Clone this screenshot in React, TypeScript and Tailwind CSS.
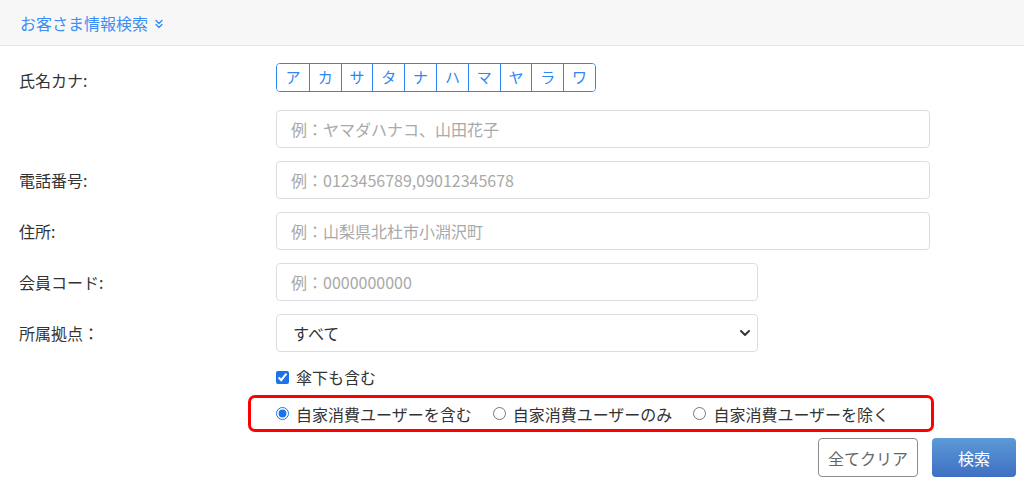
import React, { useState } from 'react';
import { ChevronsDown } from 'lucide-react';

const KANA = ['ア', 'カ', 'サ', 'タ', 'ナ', 'ハ', 'マ', 'ヤ', 'ラ', 'ワ'];

const RADIOS = [
  { id: 'include', label: '自家消費ユーザーを含む' },
  { id: 'only', label: '自家消費ユーザーのみ' },
  { id: 'exclude', label: '自家消費ユーザーを除く' },
];

const inputCls =
  'h-[38px] rounded-[4px] border border-[#dadee3] bg-white px-[14px] text-[16px] text-[#333] outline-none placeholder:text-[#a9a9a9]';

const Row: React.FC<{ label?: string; className?: string; labelCls?: string; children: React.ReactNode }> = ({
  label,
  className = '',
  labelCls = '',
  children,
}) => (
  <div className={`flex items-center ${className}`}>
    <div className={`w-[257px] shrink-0 text-[16px] text-[#333] ${labelCls}`}>{label}</div>
    <div className="flex-1">{children}</div>
  </div>
);

export default function App() {
  const [kana, setKana] = useState<string | null>(null);
  const [mode, setMode] = useState('include');
  const [sub, setSub] = useState(true);

  return (
    <div className="min-h-[489px] bg-white font-['Noto_Sans_CJK_JP','Noto_Sans',sans-serif] leading-normal">
      {/* Header */}
      <div className="flex h-[46px] items-center border-b border-[#e6e6e6] bg-[#f7f7f7] pl-[20px]">
        <span className="text-[16px] text-[#3d8ef5]">お客さま情報検索</span>
        <ChevronsDown size={14} strokeWidth={2.5} className="ml-[4px] mt-[2px] text-[#3d8ef5]" />
      </div>

      <div className="pl-[19px] pr-[94px]">
        <div className="mt-[17px] flex items-start">
          <div className="w-[257px] shrink-0 pt-[5px] text-[16px] text-[#333]">氏名カナ:</div>
          <div className="flex w-fit overflow-hidden rounded-[4px] border border-[#2f86f3]">
            {KANA.map((k, i) => (
              <button
                key={k}
                onClick={() => setKana(k)}
                className={`flex h-[27px] w-[31.8px] items-center justify-center text-[15px] ${
                  i > 0 ? 'border-l border-[#2f86f3]' : ''
                } ${kana === k ? 'bg-[#2f86f3] text-white' : 'bg-white text-[#2f86f3]'}`}
              >
                {k}
              </button>
            ))}
          </div>
        </div>

        <Row className="mt-[18px]">
          <input className={`${inputCls} w-full`} placeholder="例：ヤマダハナコ、山田花子" />
        </Row>

        <Row label="電話番号:" className="mt-[13px]">
          <input className={`${inputCls} w-full`} placeholder="例：0123456789,09012345678" />
        </Row>

        <Row label="住所:" className="mt-[13px]">
          <input className={`${inputCls} w-full`} placeholder="例：山梨県北杜市小淵沢町" />
        </Row>

        <Row label="会員コード:" className="mt-[13px]">
          <input className={`${inputCls} w-[482px]`} placeholder="例：0000000000" />
        </Row>

        <Row label="所属拠点：" className="mt-[13px]">
          <div className="relative w-[482px]">
            <select className={`${inputCls} w-full appearance-none pl-[16px]`} defaultValue="all">
              <option value="all">すべて</option>
            </select>
            <svg
              className="pointer-events-none absolute right-[7px] top-[14px]"
              width="12"
              height="10"
              viewBox="0 0 12 10"
              fill="none"
            >
              <path d="M2 3l4 4 4-4" stroke="#343a40" strokeWidth="2" strokeLinecap="round" strokeLinejoin="round" />
            </svg>
          </div>
        </Row>

        <Row className="mt-[13px]">
          <label className="flex h-[24px] items-center gap-[7px] text-[16px] text-[#333]">
            <input
              type="checkbox"
              checked={sub}
              onChange={(e) => setSub(e.target.checked)}
              className="h-[13px] w-[13px] accent-[#1a73e8]"
            />
            傘下も含む
          </label>
        </Row>
      </div>

      {/* highlighted radio group */}
      <div className="ml-[248px] mt-[6px] flex h-[37px] w-[686px] items-center rounded-[7px] border-[3px] border-[#ff0000] pl-[25px]">
        {RADIOS.map((r) => (
          <label key={r.id} className="mr-[21px] flex items-center gap-[7px] text-[16px] text-[#333]">
            <input
              type="radio"
              name="mode"
              checked={mode === r.id}
              onChange={() => setMode(r.id)}
              className="h-[13px] w-[13px] accent-[#1a73e8]"
            />
            {r.label}
          </label>
        ))}
      </div>

      <div className="mt-[6px] flex justify-end gap-[14px] pr-[8px]">
        <button className="h-[39px] w-[100px] rounded-[4px] border border-[#8c8c8c] bg-white text-[16px] text-[#666]">
          全てクリア
        </button>
        <button className="h-[39px] w-[84px] rounded-[4px] bg-gradient-to-b from-[#5d9ad8] to-[#3f6fc2] text-[16px] text-white">
          検索
        </button>
      </div>
    </div>
  );
}
